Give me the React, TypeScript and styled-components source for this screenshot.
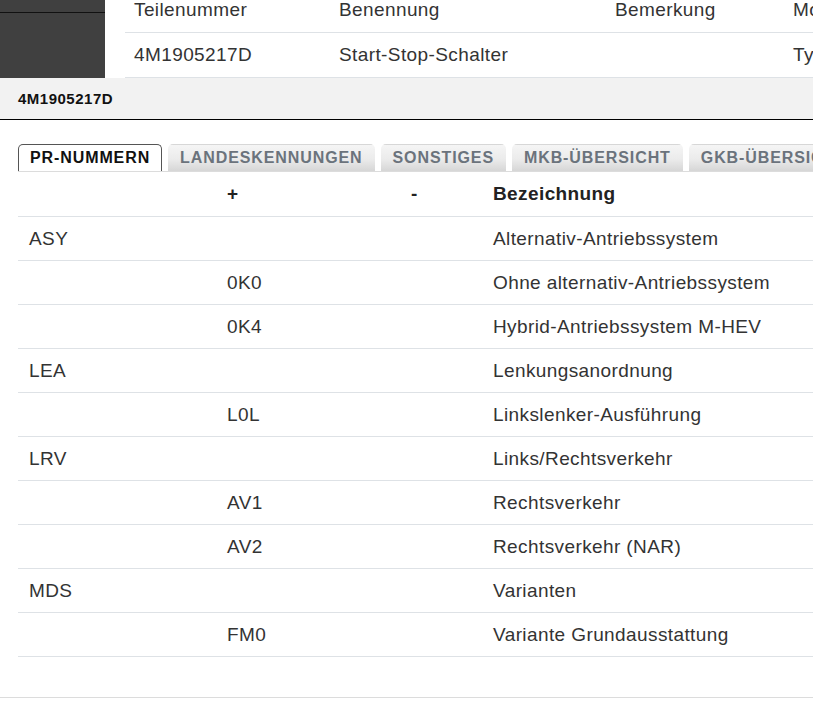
import React from 'react';
import styled, { createGlobalStyle } from 'styled-components';

const GlobalStyle = createGlobalStyle`
  html, body {
    margin: 0;
    padding: 0;
    background: #fff;
    overflow: hidden;
  }
  body {
    font-family: "Liberation Sans", Arial, sans-serif;
    color: #2a2a2a;
  }
`;

const Page = styled.div`
  width: 813px;
  height: 708px;
  overflow: hidden;
`;

const TopArea = styled.div`
  display: flex;
  height: 78px;
  overflow: hidden;
`;

const DarkPanel = styled.div`
  width: 105px;
  flex-shrink: 0;
  background: #404040;
`;

const DarkRule = styled.div`
  height: 12px;
  border-bottom: 1px solid #111;
`;

const PartsWrap = styled.div`
  flex: 1;
  margin-left: 20px;
  overflow: hidden;
`;

const Col = styled.col<{ $w?: number }>`
  width: ${p => (p.$w ? `${p.$w}px` : 'auto')};
`;

const PartsTable = styled.table`
  border-collapse: collapse;
  margin-top: -12px;
  white-space: nowrap;
  table-layout: fixed;
  width: 800px;

  td {
    height: 44px;
    padding: 0 9px;
    border-bottom: 1px solid #dee2e6;
    font-size: 19px;
    letter-spacing: 0.4px;
    color: #333;
    overflow: hidden;
  }
`;

const TitleBar = styled.div`
  height: 41px;
  display: flex;
  align-items: center;
  padding-left: 18px;
  background: #f2f2f2;
  border-bottom: 1px solid #000;
  font-size: 15px;
  font-weight: bold;
  letter-spacing: 0.5px;
  color: #111;
`;

const Content = styled.div`
  padding: 24px 0 0 18px;
`;

const TabList = styled.div`
  display: flex;
  gap: 6px;
  border-bottom: 1px solid #dcdcdc;
  white-space: nowrap;
  overflow: hidden;
`;

const Tab = styled.div<{ $active?: boolean }>`
  height: 26px;
  display: flex;
  align-items: center;
  padding: 0 11px;
  border-radius: 5px 5px 0 0;
  font-size: 16px;
  font-weight: bold;
  letter-spacing: 0.9px;
  flex-shrink: 0;
  border: 1px solid ${p => (p.$active ? '#555' : 'transparent')};
  border-bottom: none;
  color: ${p => (p.$active ? '#111' : '#6b737c')};
  background: ${p =>
    p.$active ? '#fff' : 'linear-gradient(#f5f5f5 0%, #ebebeb 55%, #d6d6d6 100%)'};
`;

const DataTable = styled.table`
  width: 100%;
  border-collapse: collapse;
  table-layout: fixed;
  white-space: nowrap;

  th, td {
    height: 43px;
    padding: 0 11px;
    text-align: left;
    border-bottom: 1px solid #dee2e6;
    font-size: 19px;
    letter-spacing: 0.4px;
  }
  th {
    height: 44px;
    font-weight: bold;
    color: #222;
  }
  td {
    color: #333;
  }
`;

const BottomRule = styled.div`
  margin-top: 40px;
  border-top: 1px solid #dcdcdc;
`;

const tabs = ['PR-NUMMERN', 'LANDESKENNUNGEN', 'SONSTIGES', 'MKB-ÜBERSICHT', 'GKB-ÜBERSICHT'];

const rows: [string, string, string, string][] = [
  ['ASY', '', '', 'Alternativ-Antriebssystem'],
  ['', '0K0', '', 'Ohne alternativ-Antriebssystem'],
  ['', '0K4', '', 'Hybrid-Antriebssystem M-HEV'],
  ['LEA', '', '', 'Lenkungsanordnung'],
  ['', 'L0L', '', 'Linkslenker-Ausführung'],
  ['LRV', '', '', 'Links/Rechtsverkehr'],
  ['', 'AV1', '', 'Rechtsverkehr'],
  ['', 'AV2', '', 'Rechtsverkehr (NAR)'],
  ['MDS', '', '', 'Varianten'],
  ['', 'FM0', '', 'Variante Grundausstattung'],
];

export default function App() {
  return (
    <Page>
      <GlobalStyle />
      <TopArea>
        <DarkPanel>
          <DarkRule />
        </DarkPanel>
        <PartsWrap>
          <PartsTable>
            <colgroup>
              <Col $w={205} />
              <Col $w={276} />
              <Col $w={178} />
              <Col $w={141} />
            </colgroup>
            <tbody>
              <tr>
                <td>Teilenummer</td>
                <td>Benennung</td>
                <td>Bemerkung</td>
                <td>Modell</td>
              </tr>
              <tr>
                <td>4M1905217D</td>
                <td>Start-Stop-Schalter</td>
                <td></td>
                <td>Typ</td>
              </tr>
            </tbody>
          </PartsTable>
        </PartsWrap>
      </TopArea>
      <TitleBar>4M1905217D</TitleBar>
      <Content>
        <TabList>
          {tabs.map((t, i) => (
            <Tab key={t} $active={i === 0}>
              {t}
            </Tab>
          ))}
        </TabList>
        <DataTable>
          <colgroup>
            <Col $w={198} />
            <Col $w={184} />
            <Col $w={82} />
            <Col />
          </colgroup>
          <thead>
            <tr>
              <th></th>
              <th>+</th>
              <th>-</th>
              <th>Bezeichnung</th>
            </tr>
          </thead>
          <tbody>
            {rows.map((r, i) => (
              <tr key={i}>
                {r.map((c, j) => (
                  <td key={j}>{c}</td>
                ))}
              </tr>
            ))}
          </tbody>
        </DataTable>
      </Content>
      <BottomRule />
    </Page>
  );
}
